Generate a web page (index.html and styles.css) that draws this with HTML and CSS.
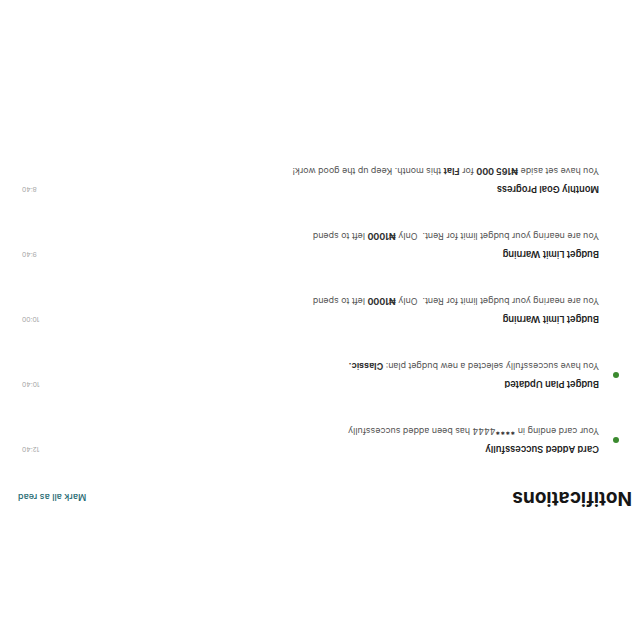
FILE: index.html
```html
<!DOCTYPE html>
<html>
<head>
<meta charset="utf-8">
<link rel="stylesheet" href="styles.css">
</head>
<body>
<div class="page">
  <div class="header">
    <h1 class="title">Notifications</h1>
    <span class="mark">Mark all as read</span>
  </div>
  <ul class="list">
    <li class="item unread">
      <span class="dot"></span>
      <div class="content">
        <div class="n-title">Card Added Successfully</div>
        <div class="n-msg">Your card ending in <b>****</b>4444 has been added successfully</div>
      </div>
      <span class="time">12:40</span>
    </li>
    <li class="item unread">
      <span class="dot"></span>
      <div class="content">
        <div class="n-title">Budget Plan Updated</div>
        <div class="n-msg">You have successfully selected a new budget plan: <b>Classic.</b></div>
      </div>
      <span class="time">10:40</span>
    </li>
    <li class="item">
      <span class="dot"></span>
      <div class="content">
        <div class="n-title">Budget Limit Warning</div>
        <div class="n-msg">You are nearing your budget limit for Rent.&nbsp; Only <b>₦1000</b> left to spend</div>
      </div>
      <span class="time">10:00</span>
    </li>
    <li class="item">
      <span class="dot"></span>
      <div class="content">
        <div class="n-title">Budget Limit Warning</div>
        <div class="n-msg">You are nearing your budget limit for Rent.&nbsp; Only <b>₦1000</b> left to spend</div>
      </div>
      <span class="time">9:40</span>
    </li>
    <li class="item">
      <span class="dot"></span>
      <div class="content">
        <div class="n-title">Monthly Goal Progress</div>
        <div class="n-msg">You have set aside <b>₦165 000</b> for <b>Flat</b> this month. Keep up the good work!</div>
      </div>
      <span class="time">8:40</span>
    </li>
  </ul>
</div>
</body>
</html>
```

FILE: styles.css
```css
html, body {
  margin: 0;
  padding: 0;
  background: #ffffff;
}
.page {
  width: 640px;
  height: 640px;
  box-sizing: border-box;
  padding-top: 130px;
  transform: rotate(180deg);
  font-family: Inter, "Liberation Sans", sans-serif;
  background: #ffffff;
}
.header {
  display: flex;
  align-items: center;
  justify-content: space-between;
  padding: 0 18px 0 8px;
  height: 24px;
}
.title {
  margin: 0;
  font-size: 19px;
  font-weight: 700;
  color: #161616;
  line-height: 24px;
}
.mark {
  font-size: 9px;
  color: #1e6a72;
  font-weight: 500;
}
.list {
  list-style: none;
  margin: 14px 0 0 0;
  padding: 0;
}
.item {
  display: flex;
  align-items: flex-start;
  padding: 16px 22px 16px 21px;
  height: 33px;
}
.dot {
  width: 6px;
  height: 6px;
  border-radius: 50%;
  margin-top: 13px;
  margin-right: 14px;
  flex: none;
}
.unread .dot {
  background: #3b8a2e;
}
.content {
  flex: 1;
  display: flex;
  flex-direction: column;
  gap: 4px;
}
.n-title {
  font-size: 9.3px;
  font-weight: 600;
  color: #222;
  line-height: 14px;
}
.n-msg {
  font-size: 8.85px;
  color: #555;
  line-height: 14px;
}
.n-msg b {
  font-weight: 700;
  color: #333;
}
.time {
  font-size: 6.8px;
  color: #a8a8a8;
  line-height: 14px;
}
```
